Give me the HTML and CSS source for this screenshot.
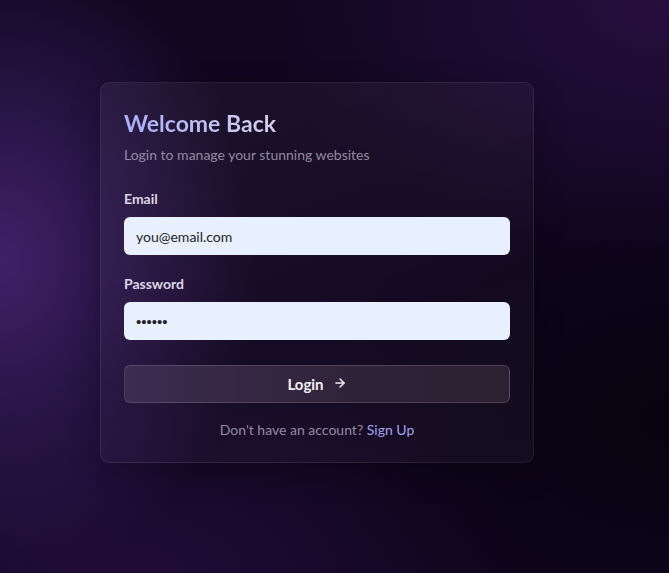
FILE: index.html
```html
<!doctype html>
<html lang="en">
  <head>
    <meta charset="UTF-8" />
    <meta name="viewport" content="width=device-width, initial-scale=1.0" />
    <title>Login</title>
    <link rel="stylesheet" href="styles.css">
  </head>
  <body>
    <div class="card">
      <h1>Welcome Back</h1>
      <p class="subtitle">Login to manage your stunning websites</p>

      <form class="login-form">
        <div class="field">
          <label for="email">Email</label>
          <input type="email" id="email" class="text-input" value="you@email.com" />
        </div>

        <div class="field">
          <label for="password">Password</label>
          <input type="password" id="password" class="text-input password" value="secret" />
        </div>

        <button type="button" class="login-btn">
          <span>Login</span>
          <svg class="arrow" width="14" height="14" viewBox="0 0 24 24" fill="none" stroke="currentColor" stroke-width="2.4" stroke-linecap="round" stroke-linejoin="round">
            <path d="M5 12h14" />
            <path d="M12 5l7 7-7 7" />
          </svg>
        </button>
      </form>

      <p class="signup">Don't have an account? <a href="#">Sign Up</a></p>
    </div>
  </body>
</html>
```

FILE: styles.css
```css
* {
  margin: 0;
  padding: 0;
  box-sizing: border-box;
}

html, body {
  height: 100%;
}

body {
  font-family: Lato, 'Open Sans', sans-serif;
  background-color: #10061f;
  background-image:
    radial-gradient(ellipse 260px 320px at 0px 260px, rgba(72, 38, 118, 0.85), transparent 100%),
    radial-gradient(ellipse 420px 260px at 669px 0px, rgba(44, 16, 70, 0.8), transparent 100%),
    radial-gradient(ellipse 360px 260px at 669px 420px, rgba(6, 2, 12, 0.8), transparent 100%),
    radial-gradient(ellipse 400px 200px at 120px 573px, rgba(40, 14, 66, 0.7), transparent 100%);
  display: flex;
  align-items: flex-start;
  padding: 82px 0 0 100px;
  overflow: hidden;
}

.card {
  width: 434px;
  padding: 24px 23px 22px;
  border-radius: 9px;
  border: 1px solid rgba(255, 255, 255, 0.07);
  background: linear-gradient(160deg, rgba(255, 255, 255, 0.05) 0%, rgba(255, 255, 255, 0.025) 60%, rgba(255, 255, 255, 0.04) 100%);
  box-shadow: 0 10px 30px rgba(0, 0, 0, 0.25);
}

h1 {
  font-size: 23px;
  line-height: 32px;
  font-weight: 700;
  background: linear-gradient(90deg, #a7aefa 0%, #c2c3f2 60%, #d3d0ee 100%);
  -webkit-background-clip: text;
  -webkit-text-fill-color: transparent;
  background-clip: text;
  display: inline-block;
}

.subtitle {
  margin-top: 6px;
  font-size: 14px;
  line-height: 20px;
  color: #938aa3;
}

.login-form {
  margin-top: 24px;
}

.field {
  margin-bottom: 19px;
}

.field label {
  display: block;
  font-size: 14px;
  line-height: 20px;
  font-weight: 700;
  color: #dcd6e4;
  margin-bottom: 8px;
}

.text-input {
  width: 100%;
  height: 38px;
  padding: 0 12px;
  border: none;
  border-radius: 6px;
  background: #e8f0fe;
  font-family: inherit;
  font-size: 14px;
  color: #23222b;
  outline: none;
}

.text-input.password {
  font-family: 'Liberation Sans', Arial, sans-serif;
  font-size: 15px;
}

.login-btn {
  margin-top: 25px;
  width: 100%;
  height: 38px;
  display: flex;
  align-items: center;
  justify-content: center;
  gap: 9px;
  border-radius: 6px;
  border: 1px solid rgba(255, 255, 255, 0.14);
  background: linear-gradient(90deg, #3c2c51 0%, #2f2338 60%, #2b2131 100%);
  color: #f4f0f8;
  font-family: inherit;
  font-size: 15px;
  font-weight: 700;
  cursor: pointer;
}

.arrow {
  margin-top: -2px;
}

.signup {
  margin-top: 17px;
  text-align: center;
  font-size: 14px;
  line-height: 20px;
  color: #948aa3;
}

.signup a {
  color: #a3a3ee;
  text-decoration: none;
}
```
